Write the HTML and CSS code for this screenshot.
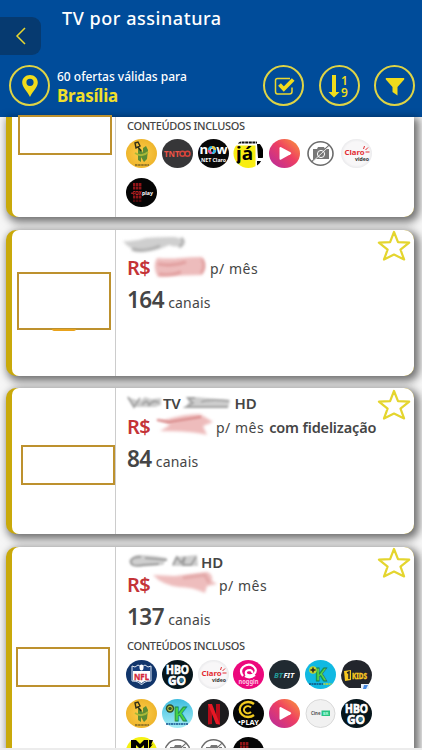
FILE: index.html
```html
<!DOCTYPE html>
<html lang="pt-BR">
<head>
    <meta charset="UTF-8">
    <meta name="viewport" content="width=device-width, initial-scale=1.0">
    <title>TV por assinatura</title>
    <link rel="stylesheet" href="styles.css">
</head>
<body>
    <!-- shared icons, gradients and filters -->
    <svg class="sprites" width="0" height="0">
        <defs>
            <linearGradient id="play-bg" x1="1" y1="0" x2="0" y2="1">
                <stop offset="0" stop-color="#fb9a38"/>
                <stop offset=".45" stop-color="#ee3f62"/>
                <stop offset="1" stop-color="#b529a0"/>
            </linearGradient>
            <linearGradient id="sky-bg" x1="0" y1="0" x2="0" y2="1">
                <stop offset="0" stop-color="#3dbcdf"/>
                <stop offset="1" stop-color="#a6eef5"/>
            </linearGradient>
            <radialGradient id="white-bg">
                <stop offset=".8" stop-color="#f8f7f8"/>
                <stop offset="1" stop-color="#eaeaec"/>
            </radialGradient>
            <radialGradient id="yellow-bg">
                <stop offset="0" stop-color="#ffce4c"/>
                <stop offset="1" stop-color="#eeb52c"/>
            </radialGradient>
            <filter id="smudge" x="-20%" y="-40%" width="140%" height="180%"><feGaussianBlur stdDeviation="1.7"/></filter>
            <filter id="smudge-s" x="-20%" y="-40%" width="140%" height="180%"><feGaussianBlur stdDeviation="1.1"/></filter>
        </defs>
        <symbol id="star" viewBox="0 0 34 31">
            <path d="M17 2l4 10.2 11.2.5-8.7 7 3.6 9.8L17 24.6 7 29.500l3.600-9.800-8.700-7 11.200-.5z" fill="#fff" stroke="#e4d52e" stroke-width="2.2" stroke-linejoin="round"/>
        </symbol>
        <symbol id="play" viewBox="0 0 31 29">
            <ellipse cx="15.500" cy="14.500" rx="15.500" ry="14.500" fill="url(#play-bg)"/>
            <path d="M10.500 9.300q0-1.800 1.600-1L21.500 13.300q1.600 1 0 2L12.100 20.500q-1.600.8-1.600-1z" fill="#fff"/>
        </symbol>
        <symbol id="nocam" viewBox="0 0 31 29">
            <g fill="none" stroke="#6c6c6c" stroke-width="1.600">
                <ellipse cx="15.500" cy="14.500" rx="12.500" ry="11.700"/>
                <path d="M24.500 6L6.500 23"/>
            </g>
            <path d="M8 10h4l1-2h6l1 2h4v10H8z" fill="#777"/>
            <circle cx="16" cy="15" r="3.600" fill="none" stroke="#fff"/>
            <path d="M24 7.300L7.800 22.600" stroke="#fff" stroke-width=".8"/>
        </symbol>
    </svg>

    <header class="header">
        <div class="top">
            <button class="back" aria-label="Voltar">
                <svg width="12" height="18" viewBox="0 0 12 18"><path d="M10 1L2 9l8 8" fill="none" stroke="#e9d830" stroke-width="1.500"/></svg>
            </button>
            <h1>TV por assinatura</h1>
        </div>
        <div class="toolbar">
            <div class="round">
                <svg width="18" height="26" viewBox="0 0 18 26"><path d="M9 2C4.500 2 1.200 5.200 1.200 9.500c0 5 5.300 9 7.800 14.500 2.500-5.500 7.800-9.500 7.800-14.500C16.800 5.200 13.500 2 9 2zm0 3.700a3.600 3.600 0 110 7.200 3.600 3.600 0 010-7.200z" fill="#f0dc1c"/></svg>
            </div>
            <div class="place">
                <p>60 ofertas válidas para</p>
                <strong>Brasília</strong>
            </div>
            <div class="actions">
                <div class="round">
                    <svg width="24" height="24" viewBox="0 0 24 24">
                        <path d="M18 4.500H5.500q-2 0-2 2v11q0 2.500 2 2.500h12q2.500 0 2.500-2.500v-4" fill="none" stroke="#e9d830" stroke-width="1.500"/>
                        <path d="M7.500 10.500l4.300 4.500 9.400-9.500" fill="none" stroke="#f0dc1c" stroke-width="3.800"/>
                    </svg>
                </div>
                <div class="round">
                    <svg width="26" height="28" viewBox="0 0 26 28">
                        <path d="M6 3h4v17h3.500L8 25.500 2.500 20H6z" fill="#f0dc1c"/>
                        <text x="15" y="12.500" font-size="12" font-weight="600" fill="#f0dc1c">1</text>
                        <text x="15" y="25" font-size="12" font-weight="600" fill="#f0dc1c">9</text>
                    </svg>
                </div>
                <div class="round">
                    <svg width="20" height="20" viewBox="0 0 20 20"><path d="M.8 2h18.400v1.500L12.500 11v8.500L7.500 16v-5L.8 3.500z" fill="#f0dc1c"/></svg>
                </div>
            </div>
        </div>
    </header>

    <main class="offers">
        <article class="card card-first">
            <div class="brand"><div class="brand-box"></div></div>
            <div class="info">
                <h3>CONTEÚDOS INCLUSOS</h3>
                <div class="logos">
                    <svg viewBox="0 0 31 29">
                        <g id="mimi">
                            <ellipse cx="15.500" cy="14.500" rx="15.500" ry="14.500" fill="url(#yellow-bg)"/>
                            <path d="M12 9l3 1 2 4V9l3-2 2 4-1 9-3 3-3-5v5l-3-2z" fill="#5d8c33"/>
                            <path d="M9 14q7 5 13-1" fill="none" stroke="#a8b837" stroke-width="1.800"/>
                            <path d="M9 4l3-1 2 4-4 2zM12 8l3 4" fill="none" stroke="#333016" stroke-width="1.400"/>
                            <path d="M9 26h14" stroke="#7c6524" stroke-width="1.500" stroke-dasharray="2.500 .6"/>
                        </g>
                    </svg>
                    <svg viewBox="0 0 31 29">
                        <ellipse cx="15.500" cy="14.500" rx="15.500" ry="14.500" fill="#363638"/>
                        <text x="2" y="17.600" font-size="8" font-weight="700" fill="#ee5446" textLength="15.500" lengthAdjust="spacingAndGlyphs">TNT</text>
                        <g fill="none" stroke="#d5443c" stroke-width="1.500"><circle cx="20.500" cy="14.700" r="2.500"/><circle cx="25.500" cy="14.700" r="2.500"/></g>
                    </svg>
                    <svg viewBox="0 0 31 29">
                        <ellipse cx="15.500" cy="14.500" rx="15.500" ry="14.500" fill="#080808"/>
                        <text x="1.500" y="14.500" font-size="13" font-weight="700" fill="#fff" textLength="28" lengthAdjust="spacingAndGlyphs">now</text>
                        <circle cx="14" cy="11" r="3" fill="none" stroke="#2bb8e6" stroke-width="2"/>
                        <path d="M11 11a3 3 0 003 3" fill="none" stroke="#ee4c9a" stroke-width="2"/>
                        <path d="M14 8a3 3 0 013 3" fill="none" stroke="#f5c535" stroke-width="2"/>
                        <text x="3" y="23" font-size="5" fill="#fff" font-weight="700" textLength="25" lengthAdjust="spacingAndGlyphs">NET Claro</text>
                    </svg>
                    <svg viewBox="0 0 31 29">
                        <clipPath id="ja-clip"><ellipse cx="15.500" cy="14.500" rx="15" ry="14.500"/></clipPath>
                        <g clip-path="url(#ja-clip)">
                            <rect width="31" height="29" fill="#fff"/>
                            <rect y="6.500" width="22.500" height="23" fill="#f8ed12"/>
                            <path d="M5 3.500h19" stroke="#111" stroke-width="2" stroke-dasharray="3 .6"/>
                            <text x="3" y="21" font-size="17" font-weight="700" textLength="17" lengthAdjust="spacingAndGlyphs">já</text>
                            <path d="M24 5h6v14h-5zM24 22h4l-2 5h-2z"/>
                        </g>
                    </svg>
                    <svg><use href="#play"/></svg>
                    <svg><use href="#nocam"/></svg>
                    <svg viewBox="0 0 31 29">
                        <g id="claro">
                            <ellipse cx="15.500" cy="14.500" rx="15.500" ry="14.500" fill="url(#white-bg)"/>
                            <text x="3.500" y="16" font-size="7.500" font-weight="700" fill="#e32c32" textLength="20" lengthAdjust="spacingAndGlyphs">Claro</text>
                            <path d="M22.500 10l1-3M24.500 11l2.500-2.500M24.500 13h4" stroke="#e32c32" fill="none"/>
                            <text x="14" y="21.500" font-size="5" font-weight="700" fill="#333" textLength="14" lengthAdjust="spacingAndGlyphs">video</text>
                        </g>
                    </svg>
                    <svg viewBox="0 0 31 29">
                        <g id="foxplay">
                            <ellipse cx="15.500" cy="14.500" rx="15.500" ry="14.500" fill="#050505"/>
                            <path d="M7 6.500h8.500M7 10h8.500M7 19h8.500" stroke="#8e1518" stroke-width="2.800" stroke-dasharray="2.400 .6"/>
                            <path d="M7 22.800h8.500" stroke="#4c090b" stroke-width="2.500" stroke-dasharray="2.400 .6"/>
                            <text x="5" y="16.500" font-size="5" font-weight="700" fill="#e32a2c" textLength="10.500" lengthAdjust="spacingAndGlyphs">•FOX</text>
                            <text x="16" y="16.500" font-size="6" font-weight="700" fill="#fff" textLength="11" lengthAdjust="spacingAndGlyphs">play</text>
                        </g>
                    </svg>
                </div>
            </div>
        </article>

        <article class="card">
            <div class="brand"><div class="brand-box box-tall"></div><span class="brand-peek"></span></div>
            <div class="info">
                <h2>
                    <svg class="smear" width="62" height="20" viewBox="0 0 62 20">
                        <g filter="url(#smudge)">
                            <path d="M-4 6q8 12 26 10 10-1 20-6 11 4 12-2 1-7-10-6-9 0-25 1Q8 7-4 6z" fill="#cfcfcf"/>
                            <path d="M5 14q12 4 28-3M54 3q5 5-2 9" stroke="#aaa" stroke-width="3" fill="none"/>
                        </g>
                    </svg>
                </h2>
                <p class="price"><b>R$</b>
                    <svg class="smear" width="56" height="24" viewBox="0 0 56 24"><path d="M4 2q12 1 23 0t22-1q6 9 0 18-20 0-44 2-6-10-1-19z" fill="#edbcbc" filter="url(#smudge)"/><path d="M5 8q15 3 28-2M49 3q4 8-1 14M6 18q12 2 22-2" stroke="#dc9292" stroke-width="2" fill="none" filter="url(#smudge)"/></svg>
                    <span>p/ mês</span></p>
                <p class="channels"><b>164</b> <span>canais</span></p>
            </div>
            <svg class="fav"><use href="#star"/></svg>
        </article>

        <article class="card">
            <div class="brand"><div class="brand-box box-right"></div></div>
            <div class="info">
                <h2>
                    <svg class="smear" width="36" height="18" viewBox="0 0 36 18"><g filter="url(#smudge-s)"><path d="M0 3l6 10h22l6-2V4l-10 1-6-2-5 4z" fill="#cdcdcd"/><path d="M1 3l6 10 6-9M15 11q5-7 7 0 5-6 10-2" stroke="#a0a0a0" stroke-width="2" fill="none"/></g></svg>
                    <span>TV</span>
                    <svg class="smear smear-hd" width="52" height="18" viewBox="0 0 52 18"><g filter="url(#smudge-s)"><path d="M14 3H5l3 5-4 6h43l2-8z" fill="#cdcdcd"/><path d="M14 4H7l5 5-7 4h42M20 8q8-3 28-1" stroke="#a0a0a0" stroke-width="1.800" fill="none"/></g></svg>
                    <span>HD</span>
                </h2>
                <p class="price"><b>R$</b>
                    <svg class="smear" width="62" height="24" viewBox="0 0 62 24"><path d="M3 5l8 1q20-6 36-6l13 8-10 4 4 9q-15-4-47-4l10-6z" fill="#eebcbc" filter="url(#smudge)"/><path d="M4 6l12 2 32-5" stroke="#d88a8a" stroke-width="2" fill="none" filter="url(#smudge-s)"/></svg>
                    <span>p/ mês</span> <strong>com fidelização</strong></p>
                <p class="channels"><b>84</b> <span>canais</span></p>
            </div>
            <svg class="fav"><use href="#star"/></svg>
        </article>

        <article class="card card-last">
            <div class="brand"><div class="brand-box box-left"></div></div>
            <div class="info">
                <h2>
                    <svg class="smear" width="74" height="18" viewBox="0 0 74 18"><g filter="url(#smudge-s)"><path d="M2 7q5-6 13-5l14 1 11 2-4 7-26 2q-8 0-8-7zM45 13l3-9 22-2 1 11z" fill="#cfcfcf"/><path d="M14 4Q4 4 4 9t12 3l16-1M18 5l22 2M46 12l4-8 4 6 4-6-2 8h8l5-8" stroke="#9a9a9a" stroke-width="1.800" fill="none"/></g></svg>
                    <span>HD</span>
                </h2>
                <p class="price"><b>R$</b>
                    <svg class="smear" width="65" height="24" viewBox="0 0 65 24"><path d="M0 2l22 1q15-2 32-4 6 2 5 9l5 3-10 2-2 7q-12-6-26-6Q9 12 0 2z" fill="#eebdbd" filter="url(#smudge)"/><path d="M30 5l22-3 4 8" stroke="#dc9c9c" stroke-width="2" fill="none" filter="url(#smudge)"/></svg>
                    <span>p/ mês</span></p>
                <p class="channels"><b>137</b> <span>canais</span></p>
                <h3>CONTEÚDOS INCLUSOS</h3>
                <div class="logos">
                    <svg viewBox="0 0 31 29">
                        <ellipse cx="15.500" cy="14.500" rx="15.500" ry="14.500" fill="#11356b"/>
                        <path d="M6 6l3 1 3-2 3.500 2L19 5l3 2 3-1v15q-7 0-9.500 4Q13 21 6 21z" fill="#183f7d" stroke="#dfe7f2"/>
                        <ellipse cx="15.500" cy="7.500" rx="2" ry="3" fill="#fff"/>
                        <path d="M7 11h17v9.500q-7 0-8.500 3-2-3-8.500-3z" fill="#fff"/>
                        <text x="8" y="19.500" font-size="9.500" font-weight="700" fill="#d5283b" stroke="#d5283b" stroke-width=".4" textLength="15" lengthAdjust="spacingAndGlyphs">NFL</text>
                    </svg>
                    <svg viewBox="0 0 31 29">
                        <g id="hbogo">
                            <ellipse cx="15.500" cy="14.500" rx="15.500" ry="14.500" fill="#06151b"/>
                            <g font-size="12" font-weight="700" fill="#fff" stroke="#fff" stroke-width=".7">
                                <text x="4" y="14" textLength="23" lengthAdjust="spacingAndGlyphs">HBO</text>
                                <text x="6" y="24.500" textLength="18" lengthAdjust="spacingAndGlyphs">GO</text>
                            </g>
                            <circle cx="22.700" cy="9.700" r="1.400" fill="#06151b"/>
                            <circle cx="19.700" cy="20.300" r="2.200" fill="#2c7398"/>
                        </g>
                    </svg>
                    <svg viewBox="0 0 31 29"><use href="#claro"/></svg>
                    <svg viewBox="0 0 31 29">
                        <ellipse cx="15.500" cy="14.500" rx="15.500" ry="14.500" fill="#ec087c"/>
                        <path d="M10 16q-4-5 0-9 5-4 10-1 5 4 1 8-4 3-8 0-1-4 4-4 3 1 2 3M12 16q5 3 10-1" fill="none" stroke="#fff" stroke-width="2.200"/>
                        <text x="5.500" y="23.500" font-size="6.500" font-weight="700" fill="#ffc5e2" textLength="20" lengthAdjust="spacingAndGlyphs">noggin</text>
                    </svg>
                    <svg viewBox="0 0 31 29">
                        <ellipse cx="15.500" cy="14.500" rx="15.500" ry="14.500" fill="#202a31"/>
                        <text x="5" y="17.500" font-size="7.500" font-weight="700" font-style="italic" fill="#239997" textLength="9" lengthAdjust="spacingAndGlyphs">BT</text>
                        <text x="14.500" y="17.500" font-size="7.500" font-weight="700" font-style="italic" fill="#fff" textLength="10.500" lengthAdjust="spacingAndGlyphs">FIT</text>
                    </svg>
                    <svg viewBox="0 0 31 29">
                        <ellipse cx="15.500" cy="14.500" rx="15.500" ry="14.500" fill="#11b9e2"/>
                        <text x="10" y="20.500" font-size="18" font-weight="700" fill="#59d743" stroke="#167b59" stroke-width=".8">K</text>
                        <circle cx="8" cy="10" r="3.800" fill="#c4d431"/>
                        <path d="M8 7.500v5M5.500 10h5" stroke="#222" stroke-width="1.500"/>
                        <path d="M4 24h14" stroke="#13517c" stroke-width="1.500" stroke-dasharray="2 .5"/>
                        <path d="M18.500 24h8" stroke="#c4d431" stroke-width="1.500" stroke-dasharray="2 .5"/>
                    </svg>
                    <svg viewBox="0 0 31 29">
                        <path d="M2 8Q6 0 15.500 0T29 8q4 7 0 14l-4 6H8Q0 24 0 15z" fill="#22252c"/>
                        <path d="M3 11l7-1v10l-6 1z" fill="#f9c91f"/>
                        <path d="M6 13l2-1v7" stroke="#222" stroke-width="1.500" fill="none"/>
                        <text x="11" y="18.500" font-size="8" font-weight="700" fill="#f9c91f" stroke="#f9c91f" stroke-width=".4" textLength="15" lengthAdjust="spacingAndGlyphs">KIDS</text>
                        <path d="M20 24h8v5h-8z" fill="#eaf2fc"/><path d="M23 25h4l-2 4h-3z" fill="#488ae2"/>
                    </svg>
                    <svg viewBox="0 0 31 29"><use href="#mimi"/></svg>
                    <svg viewBox="0 0 31 29">
                        <ellipse cx="15.500" cy="14.500" rx="15.500" ry="14.500" fill="url(#sky-bg)"/>
                        <text x="11.500" y="21.500" font-size="20" font-weight="700" fill="#47d844" stroke="#168b54" stroke-width=".8">K</text>
                        <circle cx="8" cy="9.500" r="4.200" fill="#354f2b"/>
                        <circle cx="8" cy="9.500" r="2.300" fill="none" stroke="#c9d53d"/>
                        <path d="M4 25h22" stroke="#124f8d" stroke-width="1.500" stroke-dasharray="2 .5"/>
                    </svg>
                    <svg viewBox="0 0 31 29">
                        <ellipse cx="15.500" cy="14.500" rx="15.500" ry="14.500" fill="#1c1b1d"/>
                        <path d="M10 5h4v20l-4 .5zM18 5h4v20.500l-4-.5z" fill="#b50b19"/>
                        <path d="M10 5h4l8 20.500-4-.5z" fill="#e81925"/>
                    </svg>
                    <svg viewBox="0 0 31 29">
                        <ellipse cx="15.500" cy="14.500" rx="15.500" ry="14.500" fill="#060606"/>
                        <path d="M21 5a8.500 7.500 0 100 11" fill="none" stroke="#f2cb20" stroke-width="2.300"/>
                        <path d="M18 8.500a4 3.500 0 100 4.500" fill="none" stroke="#f2cb20" stroke-width="2"/>
                        <text x="5" y="25.500" font-size="7" font-weight="700" fill="#fff" textLength="21" lengthAdjust="spacingAndGlyphs">•PLAY</text>
                    </svg>
                    <svg><use href="#play"/></svg>
                    <svg viewBox="0 0 31 29">
                        <ellipse cx="15.500" cy="14.500" rx="14.500" ry="14" fill="#f1f1f1" stroke="#d9d9d9"/>
                        <text x="6" y="16" font-size="4.500" font-weight="700" fill="#555" textLength="9.500" lengthAdjust="spacingAndGlyphs">Cine</text>
                        <rect x="16.500" y="11.500" width="8.500" height="5.500" fill="#28c483"/>
                        <text x="18" y="16" font-size="4" font-weight="700" fill="#b0ffe0">BR</text>
                    </svg>
                    <svg viewBox="0 0 31 29"><use href="#hbogo"/></svg>
                    <svg viewBox="0 0 31 29">
                        <ellipse cx="15.500" cy="14.500" rx="15.500" ry="14.500" fill="#f5f112"/>
                        <path d="M5 13V3h5l4 4 4-4h4v10h-4V8l-4 4-4-4v5zM23 3h4l-2 5 2-1-4 5z"/>
                    </svg>
                    <svg><use href="#nocam"/></svg>
                    <svg><use href="#nocam"/></svg>
                    <svg viewBox="0 0 31 29"><use href="#foxplay"/></svg>
                </div>
            </div>
            <svg class="fav"><use href="#star"/></svg>
        </article>
    </main>
    <div class="bottom-line"></div>
</body>
</html>
```
FILE: styles.css
```css
* {
    box-sizing: border-box;
}
body {
    margin: 0;
    height: 750px;
    display: flex;
    flex-direction: column;
    overflow: hidden;
    background-color: #f6f6f6;
    color: #454545;
    font-family: "Noto Sans", "Open Sans", sans-serif;
}
h1, h2, h3, p {
    margin: 0;
}
.sprites {
    position: absolute;
}
.header {
    height: 117px;
    flex: none;
    background-color: #004c9a;
    color: #fff;
}
.top {
    display: flex;
    height: 56px;
}
.back {
    width: 41px;
    height: 38px;
    margin-top: 17px;
    padding: 0 0 0 1px;
    border: 0;
    border-radius: 0 9px 9px 0;
    background-color: #063a70;
    display: flex;
    align-items: center;
    justify-content: center;
}
h1 {
    margin: 6px 0 0 21px;
    font-size: 18px;
    line-height: 24px;
    font-weight: 500;
    letter-spacing: 0.55px;
}
.toolbar {
    display: flex;
    align-items: center;
    padding: 9px 7px 0 9px;
}
.round {
    width: 41px;
    height: 41px;
    border: 2px solid #dfd445;
    border-radius: 50%;
    display: flex;
    align-items: center;
    justify-content: center;
}
.place {
    margin-left: 7px;
    padding-top: 2px;
}
.place p {
    font-size: 12px;
    line-height: 18px;
    font-weight: 500;
}
.place strong {
    display: block;
    color: #f0df2b;
    font-size: 17px;
    line-height: 19px;
    letter-spacing: -0.2px;
}
.actions {
    display: flex;
    gap: 14.5px;
    margin-left: auto;
}
.offers {
    display: flex;
    flex-direction: column;
    gap: 12.5px;
    padding: 0 8px 0 6px;
    height: 631px;
}
.card {
    position: relative;
    display: flex;
    flex: none;
    height: 146px;
    border-radius: 10px;
    background-color: #c9a90a;
    padding-left: 6px;
    box-shadow: 3px 3px 8px 2px rgba(0, 0, 0, 0.55);
}
.card-first {
    height: 100px;
    border-top-left-radius: 0;
    border-top-right-radius: 0;
}
.card-last {
    height: 240px;
}
.brand {
    width: 104px;
    background-color: #fff;
    border-right: 1px solid #ccc;
    border-radius: 7px 0 0 7px;
}
.card-first .brand {
    border-top-left-radius: 0;
}
.brand-box {
    width: 94px;
    height: 40px;
    margin: -2px 0 0 6px;
    border: 2px solid #bd912e;
    background-color: #fff;
}
.box-tall {
    height: 58px;
    margin: 42px 0 0 5px;
}
.brand-peek {
    display: block;
    width: 24px;
    height: 2px;
    margin: -1px 0 0 40px;
    border-radius: 0 0 12px 12px;
    background-color: #e9a31d;
}
.box-right {
    margin: 57px 0 0 9px;
}
.box-left {
    margin: 100.5px 0 0 4px;
}
.info {
    flex: 1;
    padding: 5.5px 0 0 11px;
    background-color: #fff;
    border-radius: 0 10px 10px 0;
}
.card-first .info {
    padding-top: 0;
    border-top-right-radius: 0;
}
.info h2 {
    display: flex;
    align-items: center;
    height: 19px;
    font-size: 15px;
    font-weight: 600;
    letter-spacing: -0.2px;
}
.price {
    display: flex;
    align-items: center;
    height: 27px;
    font-size: 14px;
    white-space: pre;
}
.price b {
    width: 26px;
    color: #c43337;
    font-size: 20px;
    font-weight: 600;
    letter-spacing: -0.7px;
}
.price span {
    margin-left: 1px;
    padding-top: 2px;
    letter-spacing: 0.5px;
}
.price strong {
    margin-left: 5px;
    padding-top: 2px;
    font-size: 14.5px;
    font-weight: 600;
    letter-spacing: -0.15px;
}
.smear {
    flex: none;
    overflow: visible;
}
.smear-hd {
    margin-right: 2px;
}
.channels {
    display: flex;
    align-items: baseline;
    height: 36px;
    padding-top: 1px;
    line-height: 36px;
    font-size: 14px;
    letter-spacing: 0.2px;
}
.channels b {
    margin-right: 4px;
    font-size: 22.5px;
    font-weight: 600;
    letter-spacing: -0.5px;
}
.info h3 {
    font-size: 11px;
    line-height: 24px;
    font-weight: 500;
    letter-spacing: -0.35px;
}
.card-first h3 {
    line-height: 17px;
    margin-bottom: 5px;
}
.logos {
    display: grid;
    grid-template-columns: repeat(7, 31px);
    grid-auto-rows: 29px;
    gap: 9.5px 4.8px;
    margin-left: -1px;
    padding-top: 2px;
}
.card-first .logos {
    padding-top: 0;
}
.logos svg {
    width: 31px;
    height: 29px;
}
.fav {
    position: absolute;
    top: 0.5px;
    right: 3px;
    width: 34px;
    height: 31px;
}
.bottom-line {
    position: relative;
    height: 2px;
    flex: none;
    background-color: #ececec;
}
```
